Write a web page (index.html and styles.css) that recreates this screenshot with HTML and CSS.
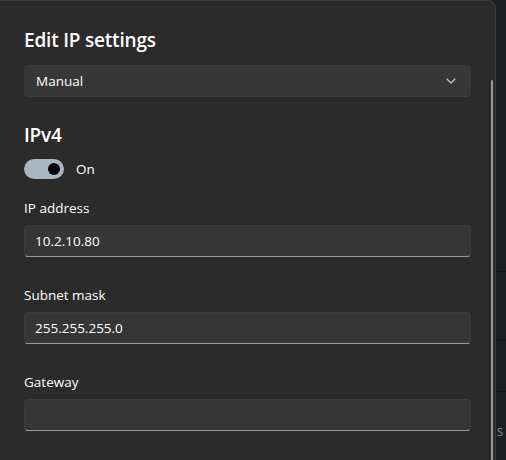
FILE: index.html
```html
<!DOCTYPE html>
<html>
<head>
<meta charset="utf-8">
<link rel="stylesheet" href="styles.css">
</head>
<body>
<div class="screen">
  <div class="dialog">
    <div class="content">
      <h1 class="title">Edit IP settings</h1>
      <div class="select">
        <span>Manual</span>
        <svg class="chev" width="10" height="6" viewBox="0 0 10 6"><path d="M1 1 L5 5 L9 1" fill="none" stroke="#d0d0d0" stroke-width="1.1" stroke-linecap="round" stroke-linejoin="round"/></svg>
      </div>
      <h2 class="section">IPv4</h2>
      <div class="toggle-row">
        <div class="toggle"><div class="knob"></div></div>
        <span class="toggle-label">On</span>
      </div>
      <div class="field">
        <div class="label">IP address</div>
        <div class="input">10.2.10.80</div>
      </div>
      <div class="field">
        <div class="label">Subnet mask</div>
        <div class="input">255.255.255.0</div>
      </div>
      <div class="field">
        <div class="label">Gateway</div>
        <div class="input"></div>
      </div>
    </div>
    <div class="scrollbar"></div>
  </div>
  <div class="backdrop">
    <div class="bd-row r1"></div>
    <div class="bd-row r2"></div>
    <div class="bd-row r3"></div>
    <div class="bd-text">S</div>
  </div>
</div>
</body>
</html>
```
FILE: styles.css
```css
html, body {
  margin: 0;
  padding: 0;
  background: #1c1f22;
  width: 506px;
  height: 460px;
  overflow: hidden;
  font-family: "Open Sans", "Noto Sans", sans-serif;
  color: #ffffff;
}
.screen {
  display: flex;
  width: 506px;
  height: 460px;
}
.dialog {
  position: relative;
  flex: none;
  width: 496px;
  height: 480px;
  box-sizing: border-box;
  background: #2b2b2b;
  border-top: 1px solid #3a3a3a;
  border-right: 1px solid #3a3a3a;
  border-top-right-radius: 8px;
  overflow: hidden;
}
.content {
  padding: 25px 24px 0 24px;
  display: flex;
  flex-direction: column;
}
.title {
  margin: 0;
  font-size: 19px;
  line-height: 28px;
  font-weight: 600;
  letter-spacing: -0.2px;
}
.select {
  margin-top: 11px;
  height: 32px;
  box-sizing: border-box;
  background: #373737;
  border: 1px solid #3a3a3a;
  border-radius: 4px;
  display: flex;
  align-items: center;
  justify-content: space-between;
  padding: 0 14px 0 11px;
  font-size: 13.5px;
}
.chev {
  display: block;
}
.section {
  margin: 24px 0 0 0;
  font-size: 19px;
  line-height: 28px;
  font-weight: 600;
  letter-spacing: -0.2px;
}
.toggle-row {
  margin-top: 10px;
  display: flex;
  align-items: center;
  gap: 12px;
  height: 20px;
}
.toggle {
  width: 40px;
  height: 20px;
  border-radius: 10px;
  background: #a8b6bf;
  display: flex;
  align-items: center;
  justify-content: flex-end;
  padding-right: 4px;
  box-sizing: border-box;
}
.knob {
  width: 12px;
  height: 12px;
  border-radius: 50%;
  background: #000000;
}
.toggle-label {
  font-size: 13.5px;
  line-height: 20px;
}
.field {
  display: flex;
  flex-direction: column;
  gap: 7px;
  margin-top: 19px;
}
.field + .field {
  margin-top: 28px;
}
.label {
  font-size: 13.5px;
  line-height: 20px;
}
.input {
  height: 32px;
  box-sizing: border-box;
  background: #363636;
  border: 1px solid #3b3b3b;
  border-bottom: 1px solid #9a9a9a;
  border-radius: 4px;
  padding: 0 10px;
  display: flex;
  align-items: center;
  font-size: 13.5px;
}
.scrollbar {
  position: absolute;
  left: 491px;
  top: 79px;
  width: 2px;
  height: 420px;
  border-radius: 1px;
  background: #9b9b9b;
}
.backdrop {
  position: relative;
  flex: 1;
  background: #1c1f22;
  display: flex;
  flex-direction: column;
}
.bd-row {
  border-bottom: 1px solid #141618;
}
.r1 { height: 271px; }
.r2 { height: 68px; }
.r3 { height: 50px; }
.bd-text {
  position: absolute;
  left: 1px;
  top: 424px;
  font-size: 11px;
  font-family: "Open Sans", sans-serif;
  color: #8f9296;
  white-space: nowrap;
}
```
